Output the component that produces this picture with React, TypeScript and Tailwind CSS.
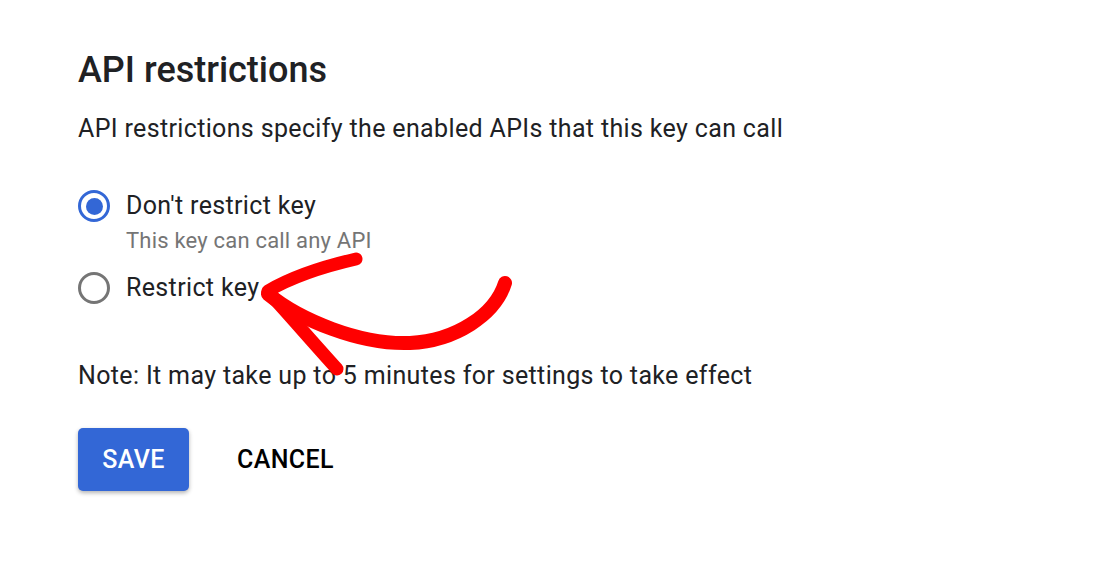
import React from "react";

function Radio({ checked }: { checked: boolean }) {
  return (
    <span
      className={
        "flex h-[32px] w-[32px] shrink-0 items-center justify-center rounded-full border-[3px] " +
        (checked ? "border-[#3367d6]" : "border-[#757575]")
      }
    >
      {checked && <span className="h-[17px] w-[17px] rounded-full bg-[#3367d6]" />}
    </span>
  );
}

function Arrow() {
  return (
    <svg
      className="pointer-events-none absolute left-0 top-0"
      width="1116"
      height="586"
      viewBox="0 0 1116 586"
      fill="none"
    >
      <g stroke="#ff0000" strokeLinecap="round" strokeLinejoin="round">
        <path d="M356 259 C330 265 295 275 268 291" strokeWidth="13" />
        <path d="M268 292 C285 310 315 345 337 369" strokeWidth="13" />
        <path d="M268 294 C300 320 360 345 410 343 C455 341 495 315 505 283" strokeWidth="14" />
      </g>
    </svg>
  );
}

export default function App() {
  return (
    <div className="relative h-[586px] w-[1116px] overflow-hidden bg-white font-['Roboto',sans-serif] text-[#202124]">
      <div className="flex flex-col pl-[78px] pt-[49px]">
        <h1 className="text-[36px] font-medium leading-[42px]">API restrictions</h1>
        <p className="mt-[23px] text-[25px] leading-[30px] tracking-[0.35px]">
          API restrictions specify the enabled APIs that this key can call
        </p>

        <div className="mt-[46px] flex flex-col">
          <label className="flex items-center gap-[16px]">
            <Radio checked />
            <span className="text-[25px] leading-[30px] tracking-[0.35px]">Don't restrict key</span>
          </label>
          <p className="ml-[48px] mt-[6px] text-[22px] leading-[26px] tracking-[0.2px] text-[#757575]">
            This key can call any API
          </p>
          <label className="mt-[18px] flex items-center gap-[16px]">
            <Radio checked={false} />
            <span className="text-[25px] leading-[30px] tracking-[0.35px]">Restrict key</span>
          </label>
        </div>

        <p className="mt-[57px] text-[25px] leading-[30px] tracking-[0.35px]">
          Note: It may take up to 5 minutes for settings to take effect
        </p>

        <div className="mt-[37px] flex items-center gap-[48px]">
          <button className="h-[63px] w-[111px] rounded-[5px] bg-[#3367d6] text-[25px] font-medium tracking-[0.4px] text-white shadow-[0_2px_4px_rgba(0,0,0,0.3)]">
            SAVE
          </button>
          <button className="text-[25px] font-medium tracking-[0.4px] text-black">CANCEL</button>
        </div>
      </div>
      <Arrow />
    </div>
  );
}
